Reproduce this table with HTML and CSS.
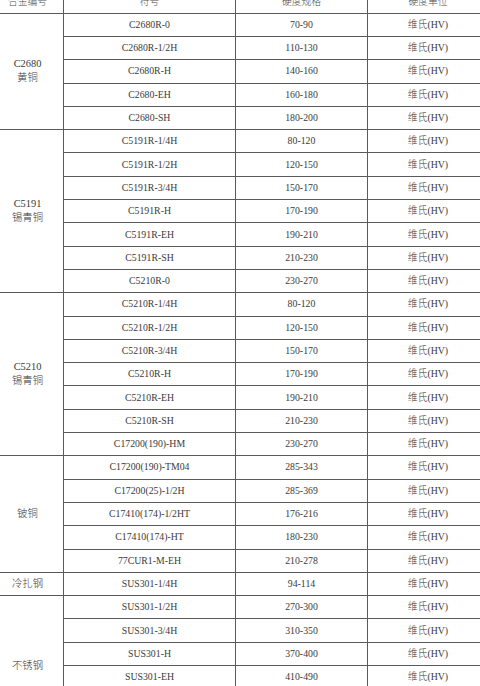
FILE: index.html
```html
<!DOCTYPE html>
<html lang="zh">
<head>
<meta charset="utf-8">
<title>硬度规格表</title>
<link rel="stylesheet" href="styles.css">
</head>
<body>
<table class="spec">
  <colgroup>
    <col class="c1"><col class="c2"><col class="c3"><col class="c4">
  </colgroup>
  <thead>
    <tr><th>合金编号</th><th>符号</th><th>硬度规格</th><th>硬度单位</th></tr>
  </thead>
  <tbody>
    <tr><td rowspan="5" class="grp">C2680<br>黄铜</td><td>C2680R-0</td><td>70-90</td><td>维氏(HV)</td></tr>
    <tr><td>C2680R-1/2H</td><td>110-130</td><td>维氏(HV)</td></tr>
    <tr><td>C2680R-H</td><td>140-160</td><td>维氏(HV)</td></tr>
    <tr><td>C2680-EH</td><td>160-180</td><td>维氏(HV)</td></tr>
    <tr><td>C2680-SH</td><td>180-200</td><td>维氏(HV)</td></tr>

    <tr><td rowspan="7" class="grp">C5191<br>锡青铜</td><td>C5191R-1/4H</td><td>80-120</td><td>维氏(HV)</td></tr>
    <tr><td>C5191R-1/2H</td><td>120-150</td><td>维氏(HV)</td></tr>
    <tr><td>C5191R-3/4H</td><td>150-170</td><td>维氏(HV)</td></tr>
    <tr><td>C5191R-H</td><td>170-190</td><td>维氏(HV)</td></tr>
    <tr><td>C5191R-EH</td><td>190-210</td><td>维氏(HV)</td></tr>
    <tr><td>C5191R-SH</td><td>210-230</td><td>维氏(HV)</td></tr>
    <tr><td>C5210R-0</td><td>230-270</td><td>维氏(HV)</td></tr>

    <tr><td rowspan="7" class="grp">C5210<br>锡青铜</td><td>C5210R-1/4H</td><td>80-120</td><td>维氏(HV)</td></tr>
    <tr><td>C5210R-1/2H</td><td>120-150</td><td>维氏(HV)</td></tr>
    <tr><td>C5210R-3/4H</td><td>150-170</td><td>维氏(HV)</td></tr>
    <tr><td>C5210R-H</td><td>170-190</td><td>维氏(HV)</td></tr>
    <tr><td>C5210R-EH</td><td>190-210</td><td>维氏(HV)</td></tr>
    <tr><td>C5210R-SH</td><td>210-230</td><td>维氏(HV)</td></tr>
    <tr><td>C17200(190)-HM</td><td>230-270</td><td>维氏(HV)</td></tr>

    <tr><td rowspan="5" class="grp">铍铜</td><td>C17200(190)-TM04</td><td>285-343</td><td>维氏(HV)</td></tr>
    <tr><td>C17200(25)-1/2H</td><td>285-369</td><td>维氏(HV)</td></tr>
    <tr><td>C17410(174)-1/2HT</td><td>176-216</td><td>维氏(HV)</td></tr>
    <tr><td>C17410(174)-HT</td><td>180-230</td><td>维氏(HV)</td></tr>
    <tr><td>77CUR1-M-EH</td><td>210-278</td><td>维氏(HV)</td></tr>

    <tr><td class="grp">冷扎钢</td><td>SUS301-1/4H</td><td>94-114</td><td>维氏(HV)</td></tr>

    <tr><td rowspan="6" class="grp">不锈钢</td><td>SUS301-1/2H</td><td>270-300</td><td>维氏(HV)</td></tr>
    <tr><td>SUS301-3/4H</td><td>310-350</td><td>维氏(HV)</td></tr>
    <tr><td>SUS301-H</td><td>370-400</td><td>维氏(HV)</td></tr>
    <tr><td>SUS301-EH</td><td>410-490</td><td>维氏(HV)</td></tr>
    <tr><td>SUS301-SH</td><td>490-530</td><td>维氏(HV)</td></tr>
    <tr><td>SUS301-ESH</td><td>530-560</td><td>维氏(HV)</td></tr>
  </tbody>
</table>
</body>
</html>
```

FILE: styles.css
```css
html, body {
  margin: 0;
  padding: 0;
  background: #ffffff;
  overflow: hidden;
}

.spec {
  margin: -10.6px 0 0 -9px;
  border-collapse: collapse;
  table-layout: fixed;
  width: 497px;
  font-family: "Liberation Serif", "Noto Sans CJK SC", serif;
  font-size: 9.8px;
  font-weight: 300;
  color: #3a3a3a;
}

.spec col.c1 { width: 72px; }
.spec col.c2 { width: 172px; }
.spec col.c3 { width: 132px; }
.spec col.c4 { width: 121px; }

.spec th,
.spec td {
  border: 1px solid #5a5a5a;
  height: 23.3px;
  padding: 0;
  text-align: center;
  vertical-align: middle;
  font-weight: 300;
  line-height: 12px;
  box-sizing: border-box;
}

.spec th {
  color: #4a4a4a;
}

.spec td.grp {
  line-height: 14px;
  font-size: 10.4px;
}
```
